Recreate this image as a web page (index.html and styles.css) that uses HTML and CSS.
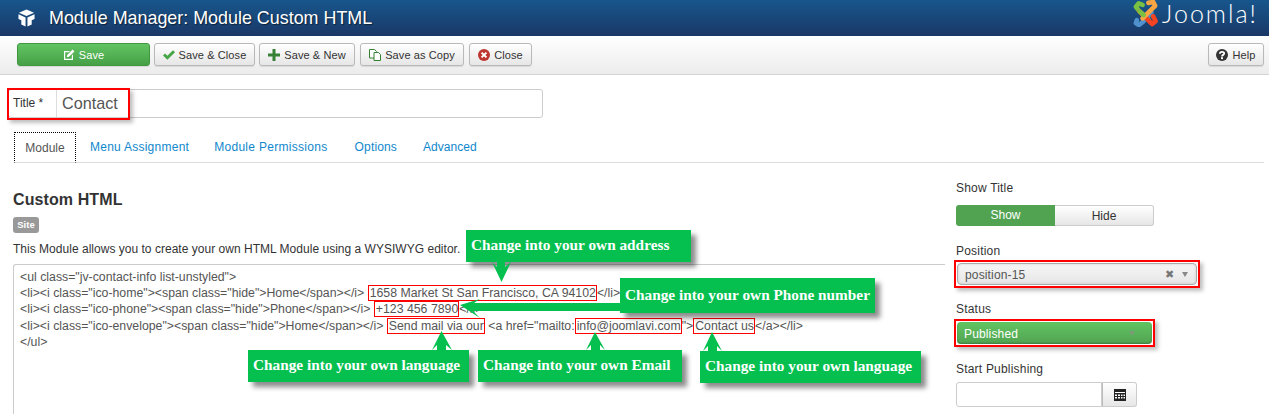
FILE: index.html
```html
<!DOCTYPE html>
<html lang="en">
<head>
<meta charset="utf-8">
<title>Module Manager: Module Custom HTML</title>
<link rel="stylesheet" href="styles.css">
</head>
<body>
<header class="topbar">
  <svg class="cube" viewBox="0 0 18 18"><path fill="#fff" d="M9 0 L17 3.500 L9 7 L1 3.500 Z"/><path fill="#fff" d="M0.500 5 L8 8.400 V18 L3.500 16 V11.500 L0.500 10 Z"/><path fill="#fff" d="M17.500 5 L10 8.400 V18 L14.500 16 V11.500 L17.500 10 Z"/></svg>
  <h1 class="page-title">Module Manager: Module Custom HTML</h1>
  <div class="brand">
    <svg class="brand-mark" viewBox="0 0 28 28">
      <g fill="none" stroke-width="4.800" stroke-linecap="round" stroke-linejoin="round">
        <path stroke="#7ac143" d="M11 5 L7 3.500 L4 7 L8 12 L17 20"/>
        <path stroke="#5091cd" d="M5 21 L4 24 L7 26 L11 23 L20 13"/>
        <path stroke="#f44321" d="M22 17 L24.500 22 L21 25 L17 21 L8 12"/>
        <path stroke="#f9a541" d="M17 3 L22 2 L24 6 L20 10 L11 19"/>
        <path stroke="#7ac143" d="M8 12 L12 15.500"/>
      </g>
    </svg>
    <span class="brand-name">Joomla!</span>
  </div>
</header>

<nav class="toolbar">
  <button class="btn btn-save"><svg class="ico" viewBox="0 0 12 12"><path fill="#fff" d="M1 2h6L5.800 3.200H2.200v6.600h6.600V6.400L10 5.200V11H1z"/><path fill="#fff" d="M9.600.6l1.800 1.800L6 7.800 3.800 8.200 4.200 6z"/></svg>Save</button>
  <button class="btn btn-saveclose"><svg class="ico" viewBox="0 0 12 12"><path fill="#46a546" d="M0 6.400 2 4.400 4.400 6.800 10 1.200 12 3.200 4.400 10.800z"/></svg>Save &amp; Close</button>
  <button class="btn btn-savenew"><svg class="ico" viewBox="0 0 12 12"><path fill="#378137" d="M4.500 0h3v4.500H12v3H7.500V12h-3V7.500H0v-3h4.500z"/></svg>Save &amp; New</button>
  <button class="btn btn-copy"><svg class="ico" viewBox="0 0 12 12"><g fill="#fff" stroke="#378137"><path d="M.5.5h5l2 2v6.500h-7z"/><path d="M5 3.500h4.500l2 2v6h-6.500z"/></g></svg>Save as Copy</button>
  <button class="btn btn-close"><svg class="ico" viewBox="0 0 12 12"><circle cx="6" cy="6" r="6" fill="#bd362f"/><path stroke="#fff" stroke-width="2" d="M3.600 3.600l4.800 4.800M8.400 3.600l-4.800 4.800"/></svg>Close</button>
  <button class="btn btn-help"><svg class="ico" viewBox="0 0 12 12"><circle cx="6" cy="6" r="6" fill="#333"/><path fill="none" stroke="#fff" stroke-width="1.800" d="M3.900 4.700C3.900 2.400 8.200 2.400 8.200 4.600 8.200 6 6 5.800 6 7.400"/><rect x="5" y="8.200" width="2" height="1.900" fill="#fff"/></svg>Help</button>
</nav>

<div class="title-row">
  <div class="title-field">
    <label class="title-label">Title *</label>
    <span class="title-value">Contact</span>
  </div>
</div>

<ul class="tabs">
  <li class="tab tab-active">Module</li>
  <li class="tab tab-menu">Menu Assignment</li>
  <li class="tab tab-perm">Module Permissions</li>
  <li class="tab tab-opts">Options</li>
  <li class="tab tab-adv">Advanced</li>
</ul>

<div class="columns">
  <main class="main-col">
    <h2 class="section-title">Custom HTML</h2>
    <span class="badge">Site</span>
    <p class="desc">This Module allows you to create your own HTML Module using a WYSIWYG editor.</p>
    <div class="editor">
      <div class="code-line">&lt;ul class="jv-contact-info list-unstyled"&gt;</div>
      <div class="code-line">&lt;li&gt;&lt;i class="ico-home"&gt;&lt;span class="hide"&gt;Home&lt;/span&gt;&lt;/i&gt; <span class="mark">1658 Market St San Francisco, CA 94102</span>&lt;/li&gt;</div>
      <div class="code-line">&lt;li&gt;&lt;i class="ico-phone"&gt;&lt;span class="hide"&gt;Phone&lt;/span&gt;&lt;/i&gt; <span class="mark">+123 456 7890</span>&lt;/li&gt;</div>
      <div class="code-line">&lt;li&gt;&lt;i class="ico-envelope"&gt;&lt;span class="hide"&gt;Home&lt;/span&gt;&lt;/i&gt; <span class="mark">Send mail via our</span> &lt;a href="mailto:<span class="mark">info@joomlavi.com</span>"&gt;<span class="mark">Contact us</span>&lt;/a&gt;&lt;/li&gt;</div>
      <div class="code-line">&lt;/ul&gt;</div>
    </div>
  </main>

  <aside class="side-col">
    <div class="field field-show">
      <div class="field-label">Show Title</div>
      <div class="toggle"><span class="toggle-on">Show</span><span class="toggle-off">Hide</span></div>
    </div>
    <div class="field field-pos">
      <div class="field-label">Position</div>
      <div class="red-frame">
        <div class="select select-pos"><span class="select-text">position-15</span><span class="clear">✖</span><span class="caret"></span></div>
      </div>
    </div>
    <div class="field field-status">
      <div class="field-label">Status</div>
      <div class="red-frame red-frame-status">
        <div class="select select-status"><span class="select-text">Published</span><span class="caret"></span></div>
      </div>
    </div>
    <div class="field field-date">
      <div class="field-label">Start Publishing</div>
      <div class="date">
        <span class="date-input"></span>
        <span class="date-btn"><svg class="cal" viewBox="0 0 12 12"><path fill="#222" d="M0 0h12v12H0z"/><path fill="#fff" d="M1 3h10v1H1zM1 5.500h2v1.500H1zM4 5.500h2v1.500H4zM7 5.500h1.500v1.500H7zM9.500 5.500H11v1.500H9.500zM1 8h2v1.500H1zM4 8h2v1.500H4zM7 8h1.500v1.500H7zM9.500 8H11v1.500H9.500z"/></svg></span>
      </div>
    </div>
  </aside>
</div>

<div class="note note-address">Change into your own address</div>
<div class="note note-phone">Change into your own Phone number</div>
<div class="note note-lang1">Change into your own language</div>
<div class="note note-email">Change into your own Email</div>
<div class="note note-lang2">Change into your own language</div>

<svg class="arrows" viewBox="0 0 1269 418">
  <g fill="#05c04f">
    <path d="M492 262 L497 267 V262 H505 V267 L511 262 L501.500 282 Z"/>
    <path d="M620 303 H474 L480 299 L460 305 L480 318 L473 311 H620 Z"/>
    <path d="M441.500 331 L452 350 L446 345 V350 H437 V345 L432 350 Z"/>
    <path d="M595 332 L605 350 L600 345 V350 H591 V345 L586 350 Z"/>
    <path d="M712 332 L722 351 L717 346 V351 H708 V346 L703 351 Z"/>
  </g>
</svg>
</body>
</html>
```
FILE: styles.css
```css
* { box-sizing: border-box; }
html, body { margin: 0; padding: 0; }
body {
  width: 1269px;
  height: 418px;
  overflow: hidden;
  position: relative;
  background: #fff;
  font-family: "Liberation Sans", Arial, sans-serif;
  font-size: 12px;
  color: #333;
}

/* Header */
.topbar {
  height: 36px;
  display: flex;
  align-items: center;
  padding-left: 18px;
  background: linear-gradient(#17568c, #1a3867);
  color: #fff;
}
.cube { width: 17px; height: 18px; margin-right: 14px; flex: none; }
.page-title {
  margin: 0;
  font-size: 17.900px;
  font-weight: 400;
  line-height: 36px;
  text-shadow: 1px 1px 1px rgba(0,0,0,.5);
}
.brand { margin-left: auto; margin-right: 11px; display: flex; align-items: flex-start; height: 36px; }
.brand-mark { width: 27px; height: 27px; margin-right: 3px; }
.brand-name {
  font-family: "Lato", sans-serif;
  font-weight: 300;
  font-size: 25px;
  line-height: 26px;
  letter-spacing: 2px;
}

/* Toolbar */
.toolbar {
  height: 39px;
  display: flex;
  align-items: flex-start;
  gap: 4px;
  padding: 7px 5px 0 17px;
  background: linear-gradient(#fff, #ececec);
  border-bottom: 1px solid #d4d4d4;
}
.btn {
  height: 23px;
  padding: 0;
  display: flex;
  align-items: center;
  justify-content: center;
  font: 11px "Liberation Sans", Arial, sans-serif;
  letter-spacing: .1px;
  color: #333;
  border: 1px solid #b9b9b9;
  border-radius: 3px;
  background: linear-gradient(#fff, #e6e6e6);
  box-shadow: 0 1px 1px rgba(0,0,0,.1);
}
.ico { width: 12px; height: 12px; margin-right: 4px; flex: none; }
.btn-save {
  width: 133px;
  color: #fff;
  border-color: #409740;
  background: linear-gradient(#62c462, #46a046);
}
.btn-saveclose { width: 101px; }
.btn-savenew { width: 96px; }
.btn-copy { width: 104px; margin-left: 1px; }
.btn-close { width: 63px; margin-left: 1px; }
.btn-help { width: 56px; margin-left: auto; }

/* Title */
.title-row { padding: 14px 0 0 8px; }
.title-field {
  width: 535px;
  height: 29px;
  display: flex;
  align-items: center;
  border: 1px solid #ccc;
  border-radius: 3px;
  position: relative;
}
.title-field::after {
  content: "";
  position: absolute;
  left: -2px;
  top: -2px;
  width: 119px;
  height: 28px;
  border: 2px solid #f00;
  box-shadow: 3px 3px 4px rgba(0,0,0,.25);
}
.title-label {
  width: 48px;
  height: 100%;
  padding-left: 4px;
  line-height: 26px;
  border-right: 1px solid #ddd;
}
.title-value { padding-left: 5px; font-size: 16.200px; color: #555; }

/* Tabs */
.tabs {
  list-style: none;
  margin: 14px 5px 0 14px;
  padding: 0;
  height: 31px;
  display: flex;
  border-bottom: 1px solid #ddd;
}
.tab {
  color: #0f87cc;
  line-height: 30px;
  margin-right: 25px;
}
.tab-active {
  width: 62px;
  height: 31px;
  margin-right: 14px;
  text-align: center;
  color: #555;
  border: 1px dotted #000;
  border-bottom: 1px solid #ddd;
}
.tab-menu { letter-spacing: .25px; }
.tab-perm { letter-spacing: .3px; margin-right: 27px; }
.tab-opts { letter-spacing: .15px; margin-right: 26px; }
.tab-adv { letter-spacing: .05px; }

/* Columns */
.columns { display: flex; height: 255px; }
.main-col { width: 945px; padding: 27px 0 0 13px; flex: none; }
.section-title { margin: 0; font-size: 16px; line-height: 20px; color: #333; letter-spacing: .1px; }
.badge {
  display: block;
  width: 26px;
  height: 16px;
  margin-top: 7px;
  background: #999;
  color: #fff;
  border-radius: 3px;
  font-size: 9.500px;
  font-weight: 700;
  line-height: 16px;
  text-align: center;
}
.desc { margin: 7px 0 0; line-height: 18px; color: #333; letter-spacing: .02px; }
.editor {
  height: 150px;
  margin-top: 6px;
  padding: 4px 0 0 6px;
  border-top: 1px solid #ccc;
  border-left: 1px solid #ccc;
  border-top-left-radius: 3px;
  color: #555;
  font-size: 12.300px;
}
.code-line { height: 16.200px; line-height: 16px; white-space: nowrap; }
.mark { border: 1px solid #f00; padding: 0 0 0 1px; color: #555; }

/* Side column */
.side-col { padding: 17px 0 0 11px; width: 300px; }
.field-label { line-height: 16px; color: #333; letter-spacing: .2px; }
.toggle {
  width: 198px;
  height: 21px;
  margin-top: 9px;
  display: flex;
  line-height: 20px;
  text-align: center;
}
.toggle-on { width: 99px; background: #51a351; color: #fff; border-radius: 3px 0 0 3px; }
.toggle-off {
  width: 99px;
  border: 1px solid #ccc;
  border-left: 0;
  border-radius: 0 3px 3px 0;
  background: linear-gradient(#fff, #e6e6e6);
}
.field-pos { margin-top: 17px; }
.red-frame {
  width: 246px;
  height: 28px;
  margin: 1px 0 0 -2px;
  padding: 1px;
  border: 2px solid #f00;
  box-shadow: 3px 3px 4px rgba(0,0,0,.25);
}
.red-frame-status { width: 201px; margin-top: 2px; }
.select {
  height: 22px;
  display: flex;
  align-items: center;
  padding: 1px 0 0 7px;
  border-radius: 4px;
}
.select-pos {
  border: 1px solid #aaa;
  background: linear-gradient(#f6f6f6, #e6e6e6);
  color: #555;
  box-shadow: inset 0 0 3px rgba(0,0,0,.15);
}
.select-status {
  background: linear-gradient(#62c462, #51a351);
  color: #fff;
  box-shadow: inset 0 -1px 2px rgba(0,0,0,.25);
  padding-right: 9px;
}
.select-text { flex: 1; letter-spacing: .15px; }
.clear { font-size: 11px; color: #777; margin-right: 8px; }
.caret {
  width: 0;
  height: 0;
  margin-right: 8px;
  border: 3.500px solid transparent;
  border-top: 5px solid #888;
  border-bottom: 0;
}
.select-status .caret { border-top-color: #7a9a7a; }
.field-status { margin-top: 13px; }
.field-date { margin-top: 14px; }
.date { display: flex; width: 181px; height: 25px; margin-top: 5px; }
.date-input {
  flex: 1;
  border: 1px solid #ccc;
  border-radius: 3px 0 0 3px;
}
.date-btn {
  width: 35px;
  display: flex;
  align-items: center;
  justify-content: center;
  border: 1px solid #ccc;
  border-left: 1px solid #bbb;
  border-radius: 0 3px 3px 0;
  background: linear-gradient(#fff, #e6e6e6);
}
.cal { width: 12px; height: 12px; }

/* Annotation overlays */
.note {
  position: absolute;
  height: 32px;
  padding-left: 5px;
  background: #05c04f;
  color: #fff;
  font-family: "Liberation Serif", "Times New Roman", serif;
  font-size: 15.300px;
  font-weight: 700;
  line-height: 30px;
  white-space: nowrap;
  box-shadow: 5px 5px 5px rgba(0,0,0,.45);
}
.note-address { left: 466px; top: 230px; width: 225px; }
.note-phone { left: 620px; top: 278px; width: 255px; height: 35px; line-height: 34px; }
.note-lang1 { left: 248px; top: 350px; width: 221px; }
.note-email { left: 478px; top: 350px; width: 204px; }
.note-lang2 { left: 700px; top: 351px; width: 221px; }
.arrows {
  position: absolute;
  left: 0;
  top: 0;
  width: 1269px;
  height: 418px;
  pointer-events: none;
}
```
